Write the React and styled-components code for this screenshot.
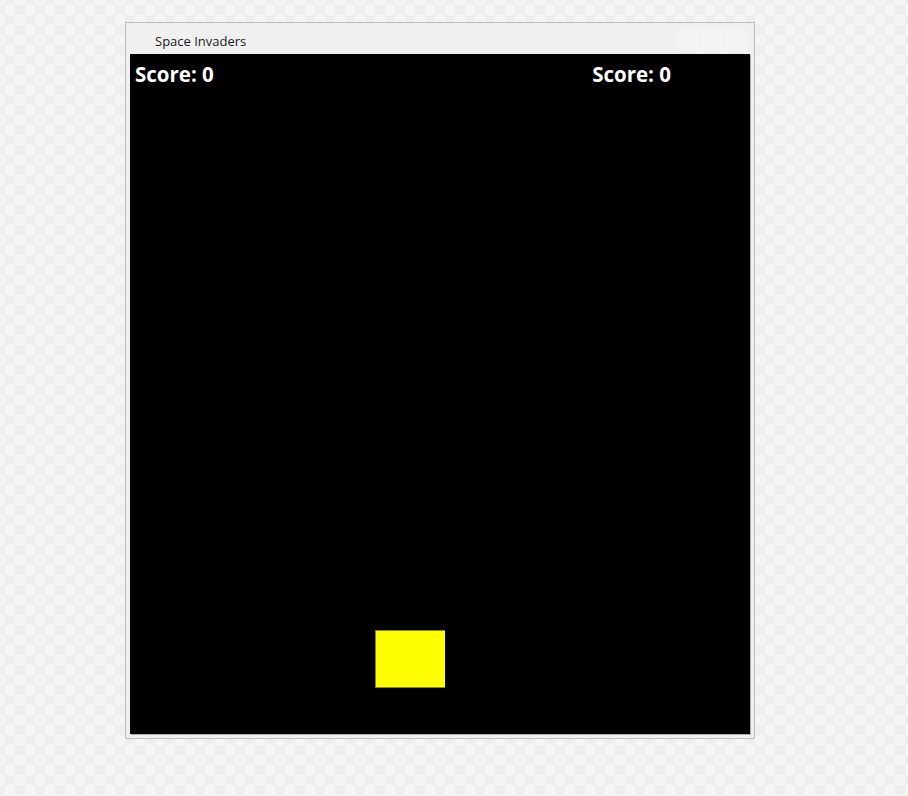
import React from 'react';
import styled, { createGlobalStyle } from 'styled-components';

const GlobalStyle = createGlobalStyle`
    html, body {
        margin: 0;
        padding: 0;
        height: 100%;
    }
    body {
        font-family: "Open Sans", "Noto Sans", sans-serif;
        background-color: #f5f5f5;
        background-image: repeating-conic-gradient(#eeeeee 0% 25%, #f5f5f5 0% 50%);
        background-size: 20px 20px;
        background-position: -5px -5px;
    }
`;

const Page = styled.div`
    padding: 22px 0 0 125px;
    min-height: 796px;
    box-sizing: border-box;
`;

const Window = styled.div`
    width: 630px;
    box-sizing: border-box;
    border: 1px solid #bdbdbd;
    background: #f0f0f0;
    padding: 0 4px 4px 4px;
`;

const TitleBar = styled.div`
    display: flex;
    align-items: center;
    justify-content: space-between;
    height: 31px;
`;

const Title = styled.span`
    font-family: "Open Sans", "Noto Sans", sans-serif;
    font-size: 13px;
    color: #1a1a1a;
    padding: 5px 0 0 25px;
`;

const Controls = styled.div`
    display: flex;
    gap: 2px;
    align-self: flex-start;
    margin: 6px 3px 0 0;
`;

const ControlButton = styled.div`
    width: 22px;
    height: 22px;
    background: #f4f4f4;
`;

const Canvas = styled.div`
    position: relative;
    width: 620px;
    height: 680px;
    background: #000;
    box-shadow: 1px 1px 0 #a9a9a9;
`;

const ScoreRow = styled.div`
    display: flex;
    justify-content: space-between;
    padding: 6px 79px 0 5px;
`;

const Score = styled.span`
    font-family: "Open Sans", "Noto Sans", sans-serif;
    font-weight: 700;
    font-size: 20.5px;
    line-height: 28px;
    color: #fff;
`;

const Player = styled.div`
    position: absolute;
    left: 245px;
    top: 576px;
    width: 70px;
    height: 58px;
    box-sizing: border-box;
    background: #ffff00;
    border-top: 1px solid #8a8a00;
    border-left: 1px solid #8a8a00;
    border-bottom: 1px solid #8a8a00;
`;

export default function App() {
    return (
        <Page>
            <GlobalStyle />
            <Window>
                <TitleBar>
                    <Title>Space Invaders</Title>
                    <Controls>
                        <ControlButton />
                        <ControlButton />
                        <ControlButton />
                    </Controls>
                </TitleBar>
                <Canvas>
                    <ScoreRow>
                        <Score>Score: 0</Score>
                        <Score>Score: 0</Score>
                    </ScoreRow>
                    <Player />
                </Canvas>
            </Window>
        </Page>
    );
}
